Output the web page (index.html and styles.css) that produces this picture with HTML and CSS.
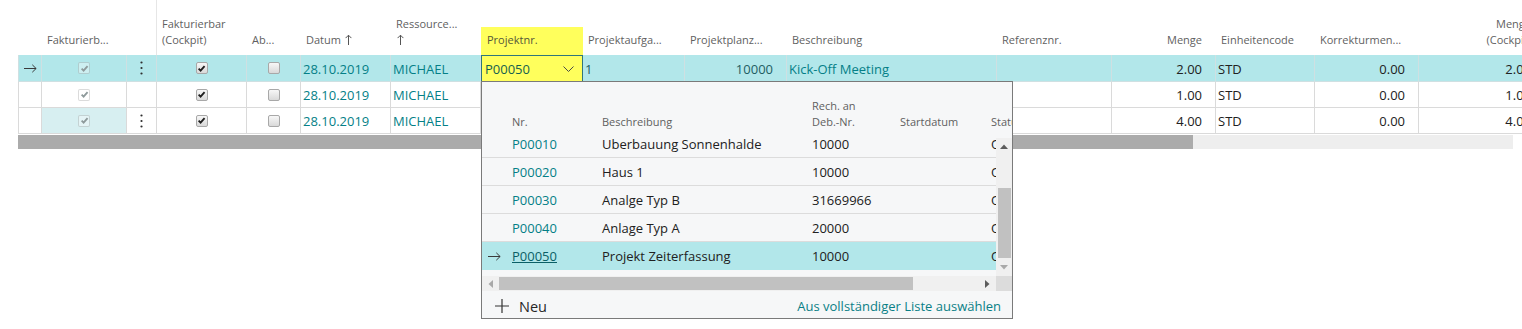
FILE: index.html
```html
<!DOCTYPE html>
<html lang="de">
<head>
  <meta charset="UTF-8" />
  <title>Projektposten</title>
  <link rel="stylesheet" href="styles.css">
</head>
<body>
  <div class="page">
    <!-- Lines grid -->
    <div class="grid">
      <div class="row head">
        <div class="th"></div>
        <div class="th"><span>Fakturierb...</span></div>
        <div class="th split"></div>
        <div class="th"><span>Fakturierbar<br>(Cockpit)</span></div>
        <div class="th"><span>Ab...</span></div>
        <div class="th"><span>Datum <svg class="sort" width="7" height="11" viewBox="0 0 7 11"><path d="M3.5 11V1.2M0.6 4.1L3.5 1.2L6.4 4.1"/></svg></span></div>
        <div class="th"><span>Ressource...<br><svg class="sort" width="7" height="11" viewBox="0 0 7 11"><path d="M3.5 11V1.2M0.6 4.1L3.5 1.2L6.4 4.1"/></svg></span></div>
        <div class="th mark"><span>Projektnr.</span></div>
        <div class="th"><span>Projektaufga...</span></div>
        <div class="th"><span>Projektplanz...</span></div>
        <div class="th"><span>Beschreibung</span></div>
        <div class="th"><span>Referenznr.</span></div>
        <div class="th num"><span>Menge</span></div>
        <div class="th"><span>Einheitencode</span></div>
        <div class="th"><span>Korrekturmen...</span></div>
        <div class="th num"><span>Menge<br>(Cockpit)</span></div>
      </div>

      <div class="row data sel">
        <div class="td c"><svg class="arrow" width="13" height="9" viewBox="0 0 13 9"><path d="M0 4.5h12.2M8.3 0.8l3.8 3.7-3.8 3.7"/></svg></div>
        <div class="td c"><span class="cb off on"><svg viewBox="0 0 10 10"><path d="M1.8 5.2l2.2 2.2 4.4-5"/></svg></span></div>
        <div class="td c"><svg class="dots" width="3" height="14" viewBox="0 0 3 14"><circle cx="1.5" cy="1.5" r="1.1"/><circle cx="1.5" cy="7" r="1.1"/><circle cx="1.5" cy="12.5" r="1.1"/></svg></div>
        <div class="td c"><span class="cb on"><svg viewBox="0 0 10 10"><path d="M1.8 5.2l2.2 2.2 4.4-5"/></svg></span></div>
        <div class="td c"><span class="cb"></span></div>
        <div class="td link">28.10.2019</div>
        <div class="td link">MICHAEL</div>
        <div class="td edit"><span>P00050</span><svg class="chev" width="11" height="6" viewBox="0 0 11 6"><path d="M0.5 0.5l5 5 5-5"/></svg></div>
        <div class="td deep">1</div>
        <div class="td num deep">10000</div>
        <div class="td link">Kick-Off Meeting</div>
        <div class="td"></div>
        <div class="td num">2.00</div>
        <div class="td">STD</div>
        <div class="td num">0.00</div>
        <div class="td num">2.00</div>
      </div>

      <div class="row data">
        <div class="td"></div>
        <div class="td c"><span class="cb off on"><svg viewBox="0 0 10 10"><path d="M1.8 5.2l2.2 2.2 4.4-5"/></svg></span></div>
        <div class="td"></div>
        <div class="td c"><span class="cb on"><svg viewBox="0 0 10 10"><path d="M1.8 5.2l2.2 2.2 4.4-5"/></svg></span></div>
        <div class="td c"><span class="cb"></span></div>
        <div class="td link">28.10.2019</div>
        <div class="td link">MICHAEL</div>
        <div class="td"></div>
        <div class="td"></div>
        <div class="td num"></div>
        <div class="td"></div>
        <div class="td"></div>
        <div class="td num">1.00</div>
        <div class="td">STD</div>
        <div class="td num">0.00</div>
        <div class="td num">1.00</div>
      </div>

      <div class="row data">
        <div class="td"></div>
        <div class="td c focus"><span class="cb off on"><svg viewBox="0 0 10 10"><path d="M1.8 5.2l2.2 2.2 4.4-5"/></svg></span></div>
        <div class="td c"><svg class="dots" width="3" height="14" viewBox="0 0 3 14"><circle cx="1.5" cy="1.5" r="1.1"/><circle cx="1.5" cy="7" r="1.1"/><circle cx="1.5" cy="12.5" r="1.1"/></svg></div>
        <div class="td c"><span class="cb on"><svg viewBox="0 0 10 10"><path d="M1.8 5.2l2.2 2.2 4.4-5"/></svg></span></div>
        <div class="td c"><span class="cb"></span></div>
        <div class="td link">28.10.2019</div>
        <div class="td link">MICHAEL</div>
        <div class="td"></div>
        <div class="td"></div>
        <div class="td num"></div>
        <div class="td"></div>
        <div class="td"></div>
        <div class="td num">4.00</div>
        <div class="td">STD</div>
        <div class="td num">0.00</div>
        <div class="td num">4.00</div>
      </div>
    </div>

    <div class="hscroll"><div class="hscroll-thumb"></div></div>

    <!-- Lookup dropdown for Projektnr. -->
    <div class="lookup">
      <div class="lk-head">
        <div></div>
        <div>Nr.</div>
        <div>Beschreibung</div>
        <div>Rech. an<br>Deb.-Nr.</div>
        <div>Startdatum</div>
        <div>Status</div>
      </div>
      <div class="lk-body">
        <div class="lk-rows">
          <div class="lk-row">
            <div></div><div class="lk-no">P00010</div><div>Uberbauung Sonnenhalde</div><div>10000</div><div></div><div>Offen</div>
          </div>
          <div class="lk-row">
            <div></div><div class="lk-no">P00020</div><div>Haus 1</div><div>10000</div><div></div><div>Offen</div>
          </div>
          <div class="lk-row">
            <div></div><div class="lk-no">P00030</div><div>Analge Typ B</div><div>31669966</div><div></div><div>Offen</div>
          </div>
          <div class="lk-row">
            <div></div><div class="lk-no">P00040</div><div>Anlage Typ A</div><div>20000</div><div></div><div>Offen</div>
          </div>
          <div class="lk-row sel">
            <div><svg class="arrow" width="13" height="9" viewBox="0 0 13 9"><path d="M0 4.5h12.2M8.3 0.8l3.8 3.7-3.8 3.7"/></svg></div>
            <div class="lk-no cur">P00050</div><div>Projekt Zeiterfassung</div><div>10000</div><div></div><div>Offen</div>
          </div>
        </div>
        <div class="lk-vbar">
          <div class="sb-btn"><svg width="8" height="5" viewBox="0 0 8 5"><path d="M0 5L4 0.5L8 5z" class="tri"/></svg></div>
          <div class="vthumb"></div>
          <div class="sb-btn"><svg width="8" height="5" viewBox="0 0 8 5"><path d="M0 0L4 4.5L8 0z" class="tri dim"/></svg></div>
        </div>
      </div>
      <div class="lk-hbar">
        <div class="lk-htrack">
          <div class="sb-btn h"><svg width="5" height="8" viewBox="0 0 5 8"><path d="M5 0L0.5 4L5 8z" class="tri dim"/></svg></div>
          <div class="hthumb"></div>
          <div class="sb-btn h right"><svg width="5" height="8" viewBox="0 0 5 8"><path d="M0 0L4.5 4L0 8z" class="tri"/></svg></div>
        </div>
        <div class="lk-corner"></div>
      </div>
      <div class="lk-foot">
        <div class="new"><svg width="14" height="14" viewBox="0 0 14 14"><path d="M7 0v14M0 7h14"/></svg><span>Neu</span></div>
        <a class="full">Aus vollständiger Liste auswählen</a>
      </div>
    </div>
  </div>
</body>
</html>
```

FILE: styles.css
```css
/* General reset */
* {
  margin: 0;
  padding: 0;
  box-sizing: border-box;
}

body {
  font-family: "Segoe UI", "Open Sans", sans-serif;
  font-size: 13px;
  color: #212121;
  background: #fff;
  overflow: hidden;
}

.page {
  position: relative;
  width: 1545px;
  height: 329px;
  padding-left: 18px;
}

/* Lines grid */
.row {
  display: grid;
  grid-template-columns: 24px 85px 30px 90px 54px 90px 90px 102px 102px 102px 210px 115px 104px 99px 104px 126px;
}
.row.head {
  height: 55px;
}
.th {
  display: flex;
  align-items: flex-end;
  padding: 0 4px 7px 5px;
  font-size: 11px;
  line-height: 16px;
  color: #5f5f5f;
  white-space: nowrap;
  overflow: hidden;
}
.th.split {
  border-right: 1px solid #e6e6e6;
}
.th.num {
  justify-content: flex-end;
  text-align: right;
  padding-right: 14px;
}
.th.mark {
  padding: 0;
}
.th.mark span {
  display: block;
  width: 100%;
  height: 28px;
  padding: 5px 6px 0;
  background: #ffff5c;
  color: #55573a;
}
.sort {
  vertical-align: -1px;
  margin-left: 1px;
}
.sort path {
  fill: none;
  stroke: #555;
  stroke-width: 1;
}

.row.data {
  height: 26px;
}
.row.data.sel {
  height: 27px;
  background: #b2e7ea;
}
.td {
  display: flex;
  align-items: center;
  padding: 1px 2px 0;
  border-right: 1px solid #dadada;
  border-bottom: 1px solid #dadada;
  white-space: nowrap;
  overflow: hidden;
}
.row.sel .td {
  border-color: #cfe0e2;
}
.td:first-child {
  border-left: 1px solid #dadada;
}
.td.c {
  justify-content: center;
  padding: 0;
}
.td.num {
  justify-content: flex-end;
  padding-right: 13px;
}
.td.link {
  color: #047f87;
}
.td.deep {
  color: #1f5e63;
}
.td.focus {
  background: #d7eff1;
}
.row.sel .td.edit {
  justify-content: space-between;
  padding: 1px 8px 0 3px;
  background: #ffff5c;
  border: 1px solid #2f767b;
  color: #16614f;
}
.chev path {
  fill: none;
  stroke: #4a4a4a;
  stroke-width: 1;
}
.arrow path {
  fill: none;
  stroke: #3a3a3a;
  stroke-width: 1;
}
.dots circle {
  fill: #2d2d2d;
}

/* Checkboxes */
.cb {
  display: flex;
  align-items: center;
  justify-content: center;
  width: 12px;
  height: 12px;
  border: 1px solid #a8a8a8;
  border-radius: 2px;
  background: linear-gradient(#f7f7f7, #d9d9d9);
}
.cb svg {
  width: 9px;
  height: 9px;
}
.cb path {
  fill: none;
  stroke: #1e1e1e;
  stroke-width: 2;
}
.cb.off {
  border-color: rgba(0, 0, 0, 0.14);
  background: rgba(255, 255, 255, 0.35);
}
.cb.off path {
  stroke: #8e9a9b;
}

/* Main horizontal scrollbar */
.hscroll {
  width: 1495px;
  height: 14px;
  margin-top: 1px;
  background: #eeeeee;
}
.hscroll-thumb {
  width: 1175px;
  height: 100%;
  background: #ababab;
}

/* Lookup dropdown */
.lookup {
  position: absolute;
  left: 481px;
  top: 81px;
  z-index: 10;
  width: 532px;
  height: 238px;
  border: 1px solid #7a7a7a;
  background: #f6f7f8;
  display: flex;
  flex-direction: column;
}
.lk-head,
.lk-row {
  display: grid;
  grid-template-columns: 25px 90px 210px 88px 91px 90px;
}
.lk-head {
  height: 48px;
  overflow: hidden;
  font-size: 11px;
  line-height: 16px;
  color: #5f5f5f;
}
.lk-head div {
  display: flex;
  align-items: flex-end;
  padding-left: 5px;
  white-space: nowrap;
}
.lk-body {
  display: flex;
  height: 146px;
}
.lk-rows {
  flex: 1;
  overflow: hidden;
}
.lk-row {
  height: 28px;
  border-bottom: 1px solid #dcdcdc;
  align-items: center;
  white-space: nowrap;
}
.lk-row div {
  padding-left: 5px;
  overflow: hidden;
}
.lk-row.sel {
  background: #b2e7ea;
  border-bottom: none;
}
.lk-row.sel div:first-child {
  display: flex;
  padding-left: 6px;
}
.lk-no {
  color: #047f87;
}
.lk-no.cur {
  color: #0b5f66;
  text-decoration: underline;
}

/* Lookup scrollbars */
.lk-vbar {
  width: 16px;
  margin-top: 8px;
  background: #f0f0f0;
  display: flex;
  flex-direction: column;
}
.sb-btn {
  height: 17px;
  display: flex;
  align-items: center;
  justify-content: center;
}
.sb-btn.h {
  width: 17px;
  height: 100%;
}
.sb-btn.right {
  margin-left: auto;
}
.tri {
  fill: #5c5c5c;
}
.tri.dim {
  fill: #a9a9a9;
}
.vthumb {
  height: 70px;
  margin: 33px 1px 1px 2px;
  background: #c1c1c1;
}
.lk-hbar {
  display: flex;
  height: 15px;
}
.lk-htrack {
  flex: 1;
  display: flex;
  background: #f0f0f0;
}
.hthumb {
  width: 414px;
  margin: 1px 0;
  background: #c1c1c1;
}
.lk-corner {
  width: 16px;
  background: #dcdcdc;
}
.lk-foot {
  flex: 1;
  display: flex;
  align-items: center;
  justify-content: space-between;
  padding: 3px 11px 0 13px;
}
.new {
  display: flex;
  align-items: center;
  gap: 10px;
  font-size: 14.5px;
  color: #262626;
}
.new path {
  stroke: #333;
  stroke-width: 1.2;
}
.full {
  color: #0a7f86;
  text-decoration: none;
}
```
